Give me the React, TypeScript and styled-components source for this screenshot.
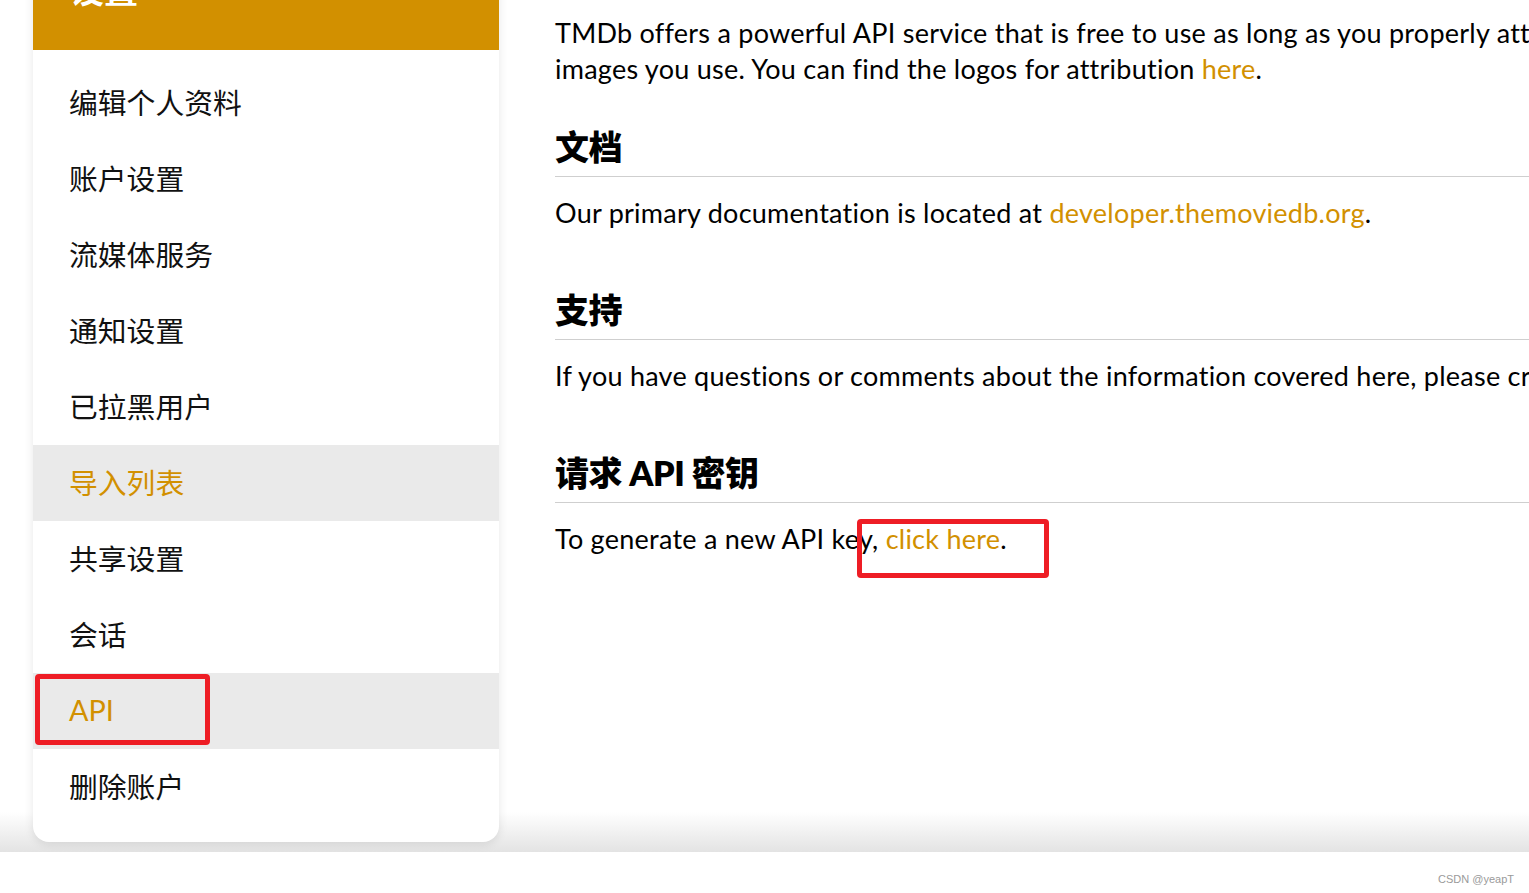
import * as React from 'react';
import styled, { createGlobalStyle } from 'styled-components';

const GlobalStyle = createGlobalStyle`
  html, body {
    margin: 0;
    padding: 0;
    background: #fff;
    overflow: hidden;
  }
  body {
    font-family: Lato, "Noto Sans CJK SC", sans-serif;
    color: #000;
  }
`;

const Page = styled.div`
  display: flex;
  flex-direction: column;
  width: 1529px;
  height: 893px;
  overflow: hidden;
`;

const Main = styled.div`
  display: flex;
  align-items: flex-start;
  height: 852px;
  flex-shrink: 0;
  padding-left: 33px;
  box-sizing: border-box;
  background: linear-gradient(to bottom, #fff 0, #fff 812px, #e3e3e3 852px);
  overflow: hidden;
`;

const Sidebar = styled.aside`
  width: 466px;
  flex-shrink: 0;
  margin-top: -50px;
  background: #fff;
  border-radius: 0 0 16px 16px;
  box-shadow: 0 2px 10px rgba(0, 0, 0, 0.1);
  overflow: hidden;
`;

const SidebarHeader = styled.div`
  height: 100px;
  box-sizing: border-box;
  padding: 20px 0 0 37px;
  background: #d29000;
  color: #fff;
  font-size: 34px;
  font-weight: 700;
  line-height: 1.2;
`;

const MenuList = styled.ul`
  list-style: none;
  margin: 0;
  padding: 15px 0 17px;
`;

const MenuItem = styled.li<{ $active?: boolean }>`
  position: relative;
  display: flex;
  align-items: center;
  height: 76px;
  box-sizing: border-box;
  padding: 0 0 3px 36px;
  font-size: 28.8px;
  font-weight: 400;
  color: ${(p) => (p.$active ? '#d29000' : '#111')};
  background: ${(p) => (p.$active ? '#eaeaea' : 'transparent')};
`;

const MarkBox = styled.span<{ $left: number; $top: number; $w: number; $h: number }>`
  position: absolute;
  left: ${(p) => p.$left}px;
  top: ${(p) => p.$top}px;
  width: ${(p) => p.$w}px;
  height: ${(p) => p.$h}px;
  box-sizing: border-box;
  border: 5px solid #ee1d25;
  border-radius: 4px;
  pointer-events: none;
`;

const Content = styled.section`
  flex: 1;
  min-width: 0;
  margin-left: 56px;
  padding-top: 15px;
  font-size: 27px;
  line-height: 36px;
  letter-spacing: 0.25px;
  color: #000;
`;

const Para = styled.p`
  margin: 0;
  white-space: nowrap;
`;

const Section = styled.div<{ $tight?: boolean }>`
  margin-top: ${(p) => (p.$tight ? 39 : 58)}px;
`;

const Heading = styled.h2`
  margin: 0 0 18px;
  padding-bottom: 9px;
  border-bottom: 1px solid #cfcfcf;
  font-size: 34px;
  line-height: 41px;
  font-weight: 800;
  letter-spacing: -0.5px;
`;

const Link = styled.a`
  position: relative;
  color: #d29000;
  text-decoration: none;
`;

const Footer = styled.footer`
  flex: 1;
  display: flex;
  justify-content: flex-end;
  align-items: flex-end;
  padding: 0 15px 8px 0;
  background: #fff;
  font-family: "Liberation Sans", Arial, sans-serif;
  font-size: 11px;
  color: #9a9a9a;
`;

const menu = [
  '编辑个人资料',
  '账户设置',
  '流媒体服务',
  '通知设置',
  '已拉黑用户',
  '导入列表',
  '共享设置',
  '会话',
  'API',
  '删除账户',
];

const App = () => (
  <Page>
    <GlobalStyle />
    <Main>
      <Sidebar>
        <SidebarHeader>设置</SidebarHeader>
        <MenuList>
          {menu.map((label) => (
            <MenuItem key={label} $active={label === '导入列表' || label === 'API'}>
              {label}
              {label === 'API' && <MarkBox $left={2} $top={1} $w={175} $h={71} />}
            </MenuItem>
          ))}
        </MenuList>
      </Sidebar>

      <Content>
        <Para>
          TMDb offers a powerful API service that is free to use as long as you properly attribute us as the source of the data and/or
          <br />
          images you use. You can find the logos for attribution <Link href="#">here</Link>.
        </Para>

        <Section $tight>
          <Heading>文档</Heading>
          <Para>
            Our primary documentation is located at <Link href="#">developer.themoviedb.org</Link>.
          </Para>
        </Section>

        <Section>
          <Heading>支持</Heading>
          <Para>
            If you have questions or comments about the information covered here, please create a post on our support forums.
          </Para>
        </Section>

        <Section>
          <Heading>请求 API 密钥</Heading>
          <Para>
            To generate a new API key,{' '}
            <Link href="#">
              click here
              <MarkBox $left={-29} $top={-3} $w={192} $h={59} />
            </Link>
            .
          </Para>
        </Section>
      </Content>
    </Main>
    <Footer>CSDN @yeapT</Footer>
  </Page>
);

export default App;
